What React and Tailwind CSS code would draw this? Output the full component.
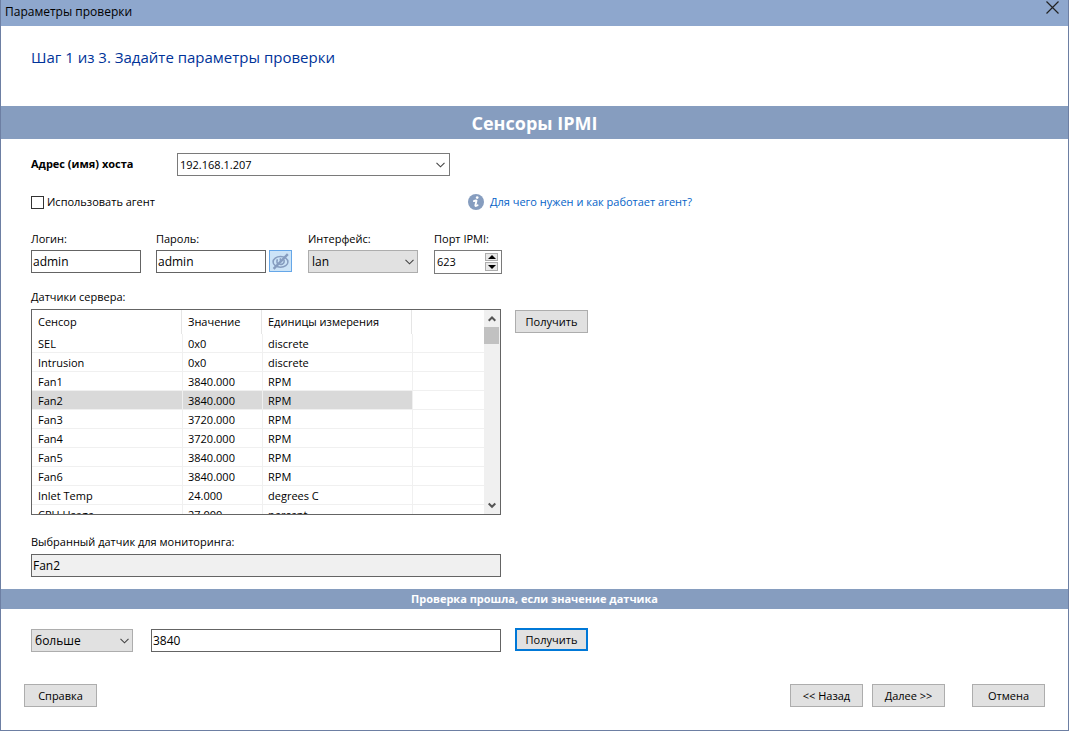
import { useState } from "react";

const SENSORS = [
  ["SEL", "0x0", "discrete"],
  ["Intrusion", "0x0", "discrete"],
  ["Fan1", "3840.000", "RPM"],
  ["Fan2", "3840.000", "RPM"],
  ["Fan3", "3720.000", "RPM"],
  ["Fan4", "3720.000", "RPM"],
  ["Fan5", "3840.000", "RPM"],
  ["Fan6", "3840.000", "RPM"],
  ["Inlet Temp", "24.000", "degrees C"],
  ["CPU Usage", "27.000", "percent"],
];

const FIELD =
  "h-[23px] border border-[#646464] bg-white px-px text-[12px] leading-4 text-black outline-none";

function Button({ children, primary = false }) {
  return (
    <button
      type="button"
      className={
        primary
          ? "h-[23px] w-[73px] shrink-0 whitespace-nowrap border-2 border-[#0078d7] bg-[#e1e1e1] leading-4"
          : "h-[23px] w-[73px] shrink-0 whitespace-nowrap border border-[#adadad] bg-[#e1e1e1] leading-4"
      }
    >
      {children}
    </button>
  );
}

function Chevron() {
  return (
    <svg width="9" height="6" viewBox="0 0 9 6" fill="none" stroke="#444" strokeWidth="1.1" aria-hidden="true">
      <path d="M0.5 0.8 4.5 4.8 8.5 0.8" />
    </svg>
  );
}

function Select({ id, label, options, className }) {
  return (
    <div className={`grid h-[23px] items-center text-[12px] ${className}`}>
      <select
        id={id}
        aria-label={label}
        className="col-start-1 row-start-1 h-full w-full appearance-none border border-[#adadad] bg-[#e1e1e1] px-[3px] outline-none"
      >
        {options.map((o) => (
          <option key={o}>{o}</option>
        ))}
      </select>
      <span className="pointer-events-none col-start-1 row-start-1 mr-1 justify-self-end">
        <Chevron />
      </span>
    </div>
  );
}

function Field({ id, label, children }) {
  return (
    <div className="flex flex-col gap-[3px]">
      <label htmlFor={id} className="leading-4">
        {label}
      </label>
      {children}
    </div>
  );
}

function ScrollArrow({ label, d }) {
  return (
    <button type="button" aria-label={label} className="flex h-[17px] w-4 items-center justify-center">
      <svg width="8" height="7" viewBox="0 0 8 7" fill="none" stroke="#555" strokeWidth="2" aria-hidden="true">
        <path d={d} />
      </svg>
    </button>
  );
}

export default function App() {
  const [selected, setSelected] = useState("Fan2");

  return (
    <div className="flex min-h-screen w-full flex-col border-x border-b border-[#6d7fa3] bg-white font-['Open_Sans','Noto_Sans',sans-serif] text-[11px] text-black">
      <header className="flex h-[26px] items-start justify-between bg-[#8ea7cd] pl-1">
        <h1 className="pt-[2px] text-[12px] leading-5">Параметры проверки</h1>
        <button type="button" aria-label="Закрыть" className="px-[9px] pt-px">
          <svg width="13" height="13" viewBox="0 0 13 13" stroke="#222" strokeWidth="1.2" aria-hidden="true">
            <path d="M0.5 0.5 12.5 12.5M12.5 0.5 0.5 12.5" />
          </svg>
        </button>
      </header>

      <p className="flex h-20 items-start px-[30px] pt-[21px] text-[15px] leading-5 text-[#003399]">
        Шаг 1 из 3. Задайте параметры проверки
      </p>

      <h2 className="h-[33px] bg-[#869dbf] text-center text-[18px] font-bold leading-[34px] text-white">
        Сенсоры IPMI
      </h2>

      <form className="flex flex-col" onSubmit={(e) => e.preventDefault()}>
        <div className="flex flex-col px-[30px] pt-[14px]">
          <div className="flex items-center">
            <label htmlFor="host" className="w-[146px] font-bold">
              Адрес (имя) хоста
            </label>
            <div className="flex h-[23px] w-[273px] items-center border border-[#7a7a7a] bg-white">
              <input id="host" defaultValue="192.168.1.207" className="h-full min-w-0 flex-1 px-[2px] pb-px outline-none" />
              <button type="button" aria-label="Список хостов" className="flex h-full items-center px-1">
                <Chevron />
              </button>
            </div>
          </div>

          <div className="mt-[17px] flex h-[18px] items-center">
            <div className="flex w-[437px] items-center gap-[3px]">
              <input
                id="agent"
                type="checkbox"
                className="size-[13px] appearance-none border border-[#333] bg-white checked:bg-[#333]"
              />
              <label htmlFor="agent">Использовать агент</label>
            </div>
            <a href="#agent" className="flex items-center gap-[6px] text-[#0563c8]">
              <svg width="16" height="16" viewBox="0 0 16 16" aria-hidden="true">
                <circle cx="8" cy="8" r="8" fill="#869dbf" />
                <circle cx="9.2" cy="3.6" r="1.35" fill="#fff" />
                <path
                  d="M5.9 7.1Q7.6 6.2 8.5 6.6L7.4 11.2Q7.2 12.7 9.6 11.3"
                  fill="none"
                  stroke="#fff"
                  strokeWidth="1.9"
                  strokeLinecap="round"
                  strokeLinejoin="round"
                />
              </svg>
              Для чего нужен и как работает агент?
            </a>
          </div>

          <div className="mt-5 flex items-start">
            <Field id="login" label="Логин:">
              <input id="login" defaultValue="admin" className={`${FIELD} w-[110px]`} />
            </Field>
            <div className="ml-[15px] flex items-start gap-[3px]">
              <Field id="password" label="Пароль:">
                <input id="password" defaultValue="admin" className={`${FIELD} w-[110px]`} />
              </Field>
              <button
                type="button"
                aria-label="Скрыть пароль"
                className="mt-[19px] flex h-[22px] w-[23px] items-center justify-center border border-[#66a7e8] bg-[#cce4f7]"
              >
                <svg
                  width="17"
                  height="17"
                  viewBox="0 0 17 17"
                  fill="none"
                  stroke="#869dbf"
                  strokeWidth="1.5"
                  aria-hidden="true"
                >
                  <ellipse cx="8.5" cy="8.9" rx="7.4" ry="5.4" />
                  <path d="M5.4 6.2Q4.2 9 6 11.2M8.6 5.2Q7.6 7.6 9.4 8.2M12 6.6Q12.8 9.4 10.6 11Q8.6 12 7.2 11.2" />
                  <path d="M15.8 1.2 1.6 15.8" strokeWidth="2.4" />
                </svg>
              </button>
            </div>
            <div className="ml-4">
              <Field id="iface" label="Интерфейс:">
                <Select id="iface" options={["lan", "lanplus"]} className="w-[110px]" />
              </Field>
            </div>
            <div className="ml-4">
              <Field id="port" label="Порт IPMI:">
                <div className="flex h-6 w-[68px] items-center border border-[#7a7a7a] bg-white pr-[3px]">
                  <input id="port" defaultValue="623" className="h-full min-w-0 flex-1 px-[2px] pb-[2px] outline-none" />
                  <div className="flex flex-col gap-px">
                    <button
                      type="button"
                      aria-label="Увеличить"
                      className="flex h-2 w-[13px] items-center justify-center border border-[#adadad] bg-[#e8e8e8]"
                    >
                      <svg width="8" height="4" viewBox="0 0 8 4" aria-hidden="true">
                        <path d="M0 4 4 0 8 4Z" />
                      </svg>
                    </button>
                    <button
                      type="button"
                      aria-label="Уменьшить"
                      className="flex h-[9px] w-[13px] items-center justify-center border border-[#adadad] bg-[#e8e8e8]"
                    >
                      <svg width="8" height="4" viewBox="0 0 8 4" aria-hidden="true">
                        <path d="M0 0 4 4 8 0Z" />
                      </svg>
                    </button>
                  </div>
                </div>
              </Field>
            </div>
          </div>

          <div id="sensors-label" className="mt-[15px] leading-4">
            Датчики сервера:
          </div>
          <div className="mt-1 flex items-start gap-[14px]">
            <div className="flex h-[206px] w-[470px] border border-[#646464] bg-white">
              <div className="min-w-0 flex-1 overflow-hidden">
                <table aria-labelledby="sensors-label" className="w-full table-fixed border-separate border-spacing-0 text-left">
                  <colgroup>
                    <col className="w-[150px]" />
                    <col className="w-[80px]" />
                    <col className="w-[150px]" />
                    <col />
                  </colgroup>
                  <thead>
                    <tr className="h-6">
                      <th className="border-r border-[#e5e5e5] px-[6px] py-0 font-normal leading-4">Сенсор</th>
                      <th className="border-r border-[#e5e5e5] px-[6px] py-0 font-normal leading-4">Значение</th>
                      <th className="border-r border-[#e5e5e5] px-[6px] py-0 font-normal leading-4">
                        Единицы измерения
                      </th>
                      <td />
                    </tr>
                  </thead>
                  <tbody>
                    {SENSORS.map(([name, value, unit]) => {
                      const fill = name === selected ? "bg-[#d9d9d9]" : "bg-white";
                      return (
                        <tr key={name} onClick={() => setSelected(name)} className="h-[19px]">
                          <td className={`border-b border-[#f0f0f0] pt-[2px] pb-0 pl-[6px] leading-4 ${fill}`}>{name}</td>
                          <td className={`border-b border-l border-[#f0f0f0] pt-[2px] pb-0 pl-[5px] leading-4 ${fill}`}>
                            {value}
                          </td>
                          <td className={`border-b border-l border-[#f0f0f0] pt-[2px] pb-0 pl-[5px] leading-4 ${fill}`}>
                            {unit}
                          </td>
                          <td className="border-b border-l border-[#f0f0f0] p-0" />
                        </tr>
                      );
                    })}
                  </tbody>
                </table>
              </div>
              <div className="flex w-4 flex-col bg-[#f0f0f0]">
                <ScrollArrow label="Вверх" d="M0.7 5.8 4 2.5 7.3 5.8" />
                <div className="mr-px h-[17px] bg-[#c1c1c1]" />
                <div className="flex-1" />
                <ScrollArrow label="Вниз" d="M0.7 1.5 4 4.8 7.3 1.5" />
              </div>
            </div>
            <div className="flex pt-px">
              <Button>Получить</Button>
            </div>
          </div>

          <label htmlFor="chosen" className="mt-[19px] leading-4">
            Выбранный датчик для мониторинга:
          </label>
          <input
            id="chosen"
            readOnly
            value={selected}
            className="mt-1 h-[23px] w-[470px] border border-[#646464] bg-[#f0f0f0] px-px text-[12px] outline-none"
          />
        </div>

        <h3 className="mt-3 h-5 bg-[#869dbf] text-center font-bold leading-5 text-white">
          Проверка прошла, если значение датчика
        </h3>

        <div className="flex items-start px-[30px] pt-[19px]">
          <div className="flex gap-[18px] pt-px">
            <Select label="Условие" options={["больше", "меньше", "равно"]} className="w-[102px]" />
            <input aria-label="Значение" defaultValue="3840" className={`${FIELD} mr-[14px] w-[350px]`} />
          </div>
          <Button primary>Получить</Button>
        </div>
      </form>

      <footer className="mt-8 flex justify-between px-[23px] pb-[23px]">
        <Button>Справка</Button>
        <div className="flex gap-[27px]">
          <div className="flex gap-[9px]">
            <Button>&lt;&lt; Назад</Button>
            <Button>Далее &gt;&gt;</Button>
          </div>
          <Button>Отмена</Button>
        </div>
      </footer>
    </div>
  );
}
